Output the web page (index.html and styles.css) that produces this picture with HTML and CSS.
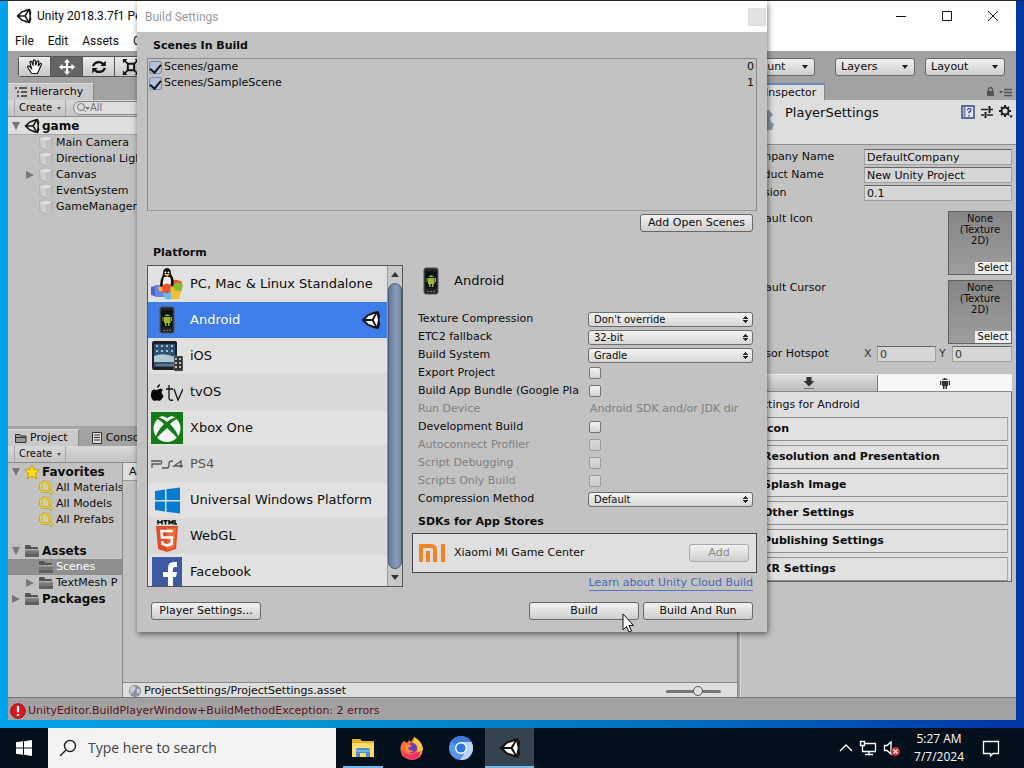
FILE: index.html
```html
<!DOCTYPE html>
<html lang="en">
<head>
<meta charset="utf-8">
<title>Unity - Build Settings</title>
<link rel="stylesheet" href="styles.css">
</head>
<body>
<svg class="sprite" aria-hidden="true">
  <symbol id="unity" viewBox="0 0 20 20"><path d="M2 10 7 5 16.500 2 18 10 16.500 18 7 15Z" class="u-bg"/><path d="M.5 10 6.500 4.500 12.800 1.800 17.500 1 19.200 5.500 18.400 10 19.200 14.500 17.500 19 12.800 18.200 6.500 15.500ZM4.500 9 10.800 9 14 3.800 7.500 6ZM15.800 4 12.600 10 15.800 16 17 10ZM4.500 11 7.500 14 14 16.200 10.800 11Z" fill-rule="evenodd" class="u-fg"/></symbol>
  <symbol id="cube" viewBox="0 0 16 16"><path d="M8 1 14.500 3 14 12 8 15.500 2 12 1.500 3Z" fill="#d0d0d0" stroke="#a8a8a8" stroke-width=".8"/><path d="M2 3.300 8 6 14 3.300 8 1.300Z" fill="#dedede"/><path d="M8 6 14 3.500 13.500 12 8 15Z" fill="#c2c2c2"/></symbol>
  <symbol id="folder" viewBox="0 0 16 16"><path d="M1 3Q1 2 2 2H6L7.500 4H13Q14 4 14 5V7H1Z" fill="#555"/><path d="M1 6H15V13Q15 14 14 14H2Q1 14 1 13Z" fill="#777"/><path d="M1 6H15V7.500H1Z" fill="#aaa"/><path d="M1 11H15V13Q15 14 14 14H2Q1 14 1 13Z" fill="#606060"/></symbol>
  <symbol id="lens" viewBox="0 0 18 18"><circle cx="8" cy="7.500" r="5.500" fill="#d2cea4" stroke="#b59a12" stroke-width="3"/><circle cx="8" cy="7.500" r="5.500" fill="none" stroke="#f2df4f" stroke-width="1.400"/><path d="m12 11.500 4 4.500" stroke="#b59a12" stroke-width="3.500"/><path d="m12 11.500 3.800 4" stroke="#f2df4f" stroke-width="1.500"/></symbol>
  <symbol id="phone" viewBox="0 0 32 32"><rect x="9" y="3" width="14" height="26" rx="2" fill="#242424" stroke="#555"/><rect x="10.500" y="6.500" width="11" height="17" fill="#07100a"/><path d="M13 13H19.500V19H13ZM13.500 12Q16.200 8.500 19 12ZM11.500 13h1v4h-1ZM20 13h1v4h-1ZM14 19h1.500v3H14ZM17 19H18.500v3h-1.500Z" fill="#9fb834"/><path d="M12 26.500h2m1 0h2m1 0h2" stroke="#777"/></symbol>
</svg>

<main class="desktop">
  <section class="window" aria-label="Unity editor">
    <header class="titlebar">
      <svg class="i16"><use href="#unity"/></svg>
      <span class="grow">Unity 2018.3.7f1 Personal</span>
      <button class="caption" aria-label="Minimize"><svg viewBox="0 0 12 12"><path d="M1 6.500H11"/></svg></button>
      <button class="caption" aria-label="Maximize"><svg viewBox="0 0 12 12"><path d="M1.500 1.500H10.500V10.500H1.500Z"/></svg></button>
      <button class="caption" aria-label="Close"><svg viewBox="0 0 12 12"><path d="M1 1 11 11M11 1 1 11"/></svg></button>
    </header>
    <nav class="menubar"><button>File</button><button>Edit</button><button>Assets</button><button>GameObject</button></nav>
    <div class="toolbar">
      <div class="tools">
        <button aria-label="Hand"><svg viewBox="0 0 20 20"><path d="M6 17 2 10.500Q1 8.500 3.500 9L6 11.500 4.500 5Q4.500 3 6.300 4L8 8.500V3Q9 1 10.300 3L10.700 8 12.500 3.500Q14 2.500 14.300 4.500L13.500 9 15.800 6Q17.500 5.500 17 7.500L14 14.500 12.500 17.500Z" fill="#fff" stroke="#111" stroke-width="1.300"/></svg></button>
        <button class="active" aria-label="Move"><svg viewBox="0 0 20 20"><path d="m10 1 3.500 4H11.200V8.800H15V6.500L19 10l-4 3.500v-2.300H11.200V15H13.500L10 19 6.500 15H8.800V11.200H5V13.500L1 10 5 6.500V8.800H8.800V5H6.500Z" fill="#fff"/></svg></button>
        <button aria-label="Rotate"><svg viewBox="0 0 20 20"><path d="M3.500 9Q5 4.500 10 4.500 13 4.500 15 7M16.500 11Q15 15.500 10 15.500 7 15.500 5 13" fill="none" stroke="#111" stroke-width="2.600"/><path d="M17.500 3V9H11.500ZM2.500 17V11H8.500Z" fill="#111"/></svg></button>
        <button aria-label="Scale"><svg viewBox="0 0 20 20"><path d="M6.500 6.500H13.500V13.500H6.500Z" fill="none" stroke="#111" stroke-width="2.200"/><path d="M2 2 6 6M18 2 14 6M2 18 6 14M18 18 14 14" stroke="#111" stroke-width="1.800"/><path d="M1 1H6L1 6ZM19 1V6L14 1ZM1 19V14L6 19ZM19 19H14L19 14Z" fill="#111"/></svg></button>
      </div>
      <div class="drops"><button>Account</button><button>Layers</button><button>Layout</button></div>
    </div>
    <div class="panes">
      <div class="left">
        <section class="hierarchy">
          <div class="tabs"><button class="tab on"><svg class="i12" viewBox="0 0 12 12"><path d="M0 2H2M4 2H12M2 6H4M6 6H12M2 10H4M6 10H12" stroke="#333" stroke-width="1.500"/></svg>Hierarchy</button></div>
          <div class="subbar"><button class="create">Create</button><label class="search"><svg class="i14" viewBox="0 0 14 14"><circle cx="5" cy="6" r="3.500" fill="none" stroke="#777"/><path d="m8 9 2 2" stroke="#777"/><path d="M9 6h5l-2.500 3Z" fill="#777"/></svg><input type="text" placeholder="All" aria-label="Search hierarchy"></label></div>
          <ul class="tree">
            <li class="scene"><i class="arrow down"></i><svg class="i16"><use href="#unity"/></svg><b>game</b></li>
            <li class="child"><i class="arrow"></i><svg class="i16"><use href="#cube"/></svg>Main Camera</li>
            <li class="child"><i class="arrow"></i><svg class="i16"><use href="#cube"/></svg>Directional Light</li>
            <li class="child"><i class="arrow right"></i><svg class="i16"><use href="#cube"/></svg>Canvas</li>
            <li class="child"><i class="arrow"></i><svg class="i16"><use href="#cube"/></svg>EventSystem</li>
            <li class="child"><i class="arrow"></i><svg class="i16"><use href="#cube"/></svg>GameManager</li>
          </ul>
        </section>
        <section class="project">
          <div class="tabs"><button class="tab on"><svg class="i12" viewBox="0 0 12 12"><path d="M.5 10.500V2.500H5L6 4H11V10.500ZM.5 5.500H11" fill="#999" stroke="#333"/></svg>Project</button><button class="tab"><svg class="i12" viewBox="0 0 12 12"><path d="M1.500.5H10.500V11.500H1.500Z" fill="#ddd" stroke="#333"/><path d="M3 3H9M3 5.500H9M3 8H9" stroke="#333"/></svg>Console</button></div>
          <div class="subbar"><button class="create">Create</button></div>
          <div class="browser">
            <ul class="tree folders">
              <li><i class="arrow down"></i><svg class="i16" viewBox="0 0 16 16"><path d="m8 .8 2.200 4.700 5.200.6-3.900 3.500 1.100 5.100L8 12.200l-4.600 2.500 1.100-5.100L.6 6.100l5.200-.6Z" fill="#ffdc20" stroke="#c89800"/></svg><b>Favorites</b></li>
              <li class="child"><i class="arrow"></i><svg class="i16"><use href="#lens"/></svg>All Materials</li>
              <li class="child"><i class="arrow"></i><svg class="i16"><use href="#lens"/></svg>All Models</li>
              <li class="child gap"><i class="arrow"></i><svg class="i16"><use href="#lens"/></svg>All Prefabs</li>
              <li><i class="arrow down"></i><svg class="i16"><use href="#folder"/></svg><b>Assets</b></li>
              <li class="child selected"><i class="arrow"></i><svg class="i16"><use href="#folder"/></svg>Scenes</li>
              <li class="child"><i class="arrow right"></i><svg class="i16"><use href="#folder"/></svg>TextMesh P</li>
              <li><i class="arrow right"></i><svg class="i16"><use href="#folder"/></svg><b>Packages</b></li>
            </ul>
            <div class="files">
              <div class="crumbs">Assets</div>
              <div class="pathbar"><svg class="i16" viewBox="0 0 16 16"><circle cx="8" cy="8" r="7" fill="#8c929b"/><path d="M2 5Q6 1 8 3T6 9 3 11ZM10 5l4 1-1 5-3-1Z" fill="#c9ced5"/></svg><span class="grow">ProjectSettings/ProjectSettings.asset</span><input type="range" min="0" max="100" value="60" aria-label="Icon size"></div>
            </div>
          </div>
        </section>
      </div>
      <aside class="inspector">
        <div class="tabs"><button class="tab on focus"><svg class="i12" viewBox="0 0 12 12"><circle cx="6" cy="6" r="5" fill="#345b9c"/></svg>Inspector</button><span class="grow"></span><svg class="tabicons" viewBox="0 0 28 12"><path d="M3.500 5V3Q5.500 0 7.500 3V5" fill="none" stroke="#555" stroke-width="1.500"/><path d="M2 5H9V10H2Z" fill="#555"/><path d="M14 5H18L16 7.500Z" fill="#555"/><path d="M19 3.500H27M19 6.500H27M19 9.500H27" stroke="#555" stroke-width="1.300"/></svg></div>
        <div class="ihead">
          <svg class="gear" viewBox="0 0 34 34"><path d="m13 1 6 0 1 4 4 2 4-2 4 5-3 3 1 4 3 2-2 6-4 0-3 3 0 4-6 2-3-3-4 0-3-3-5-2 1-5-3-3 2-6 4-1 2-4Z" fill="#8d959f"/><circle cx="16" cy="17" r="7" fill="#c9cdd2"/></svg>
          <h2>PlayerSettings</h2>
          <svg class="i14" viewBox="0 0 14 14"><path d="M1 1H13V13H1Z" fill="#e6eaf4" stroke="#334b80" stroke-width="1.500"/><path d="M3.500 2V12" stroke="#6d80ae" stroke-width="2"/><path d="M6 5Q8.500 2.500 10 4.500 10 6.500 8 7V8.500M8 10v1.500" fill="none" stroke="#334b80" stroke-width="1.300"/></svg>
          <svg class="i14" viewBox="0 0 14 14"><path d="M1 4.500H8M10 4.500H13M1 10H4M7 10H13" stroke="#222" stroke-width="1.600"/><path d="M9.500 1V8M5.500 7V13" stroke="#222" stroke-width="2"/></svg>
          <svg class="i14" viewBox="0 0 14 14"><circle cx="6" cy="6" r="3.500" fill="none" stroke="#222" stroke-width="2"/><path d="M6 0V2M6 10V12M0 6H2M10 6H12M2 2l1.300 1.300M10 2 8.700 3.300M2 10l1.300-1.300M10 10 8.700 8.700" stroke="#222" stroke-width="2"/><path d="M10 10.500h4L12 13Z" fill="#222"/></svg>
        </div>
        <div class="fields">
          <label class="field"><span>Company Name</span><input type="text" value="DefaultCompany"></label>
          <label class="field"><span>Product Name</span><input type="text" value="New Unity Project"></label>
          <label class="field"><span>Version</span><input type="text" value="0.1"></label>
          <div class="texfield"><span>Default Icon</span><div class="texture"><span>None<br>(Texture<br>2D)</span><button>Select</button></div></div>
          <div class="texfield"><span>Default Cursor</span><div class="texture"><span>None<br>(Texture<br>2D)</span><button>Select</button></div></div>
          <div class="field hotspot"><span>Cursor Hotspot</span><div class="xy"><label for="hx">X</label><input id="hx" type="text" value="0"><label for="hy">Y</label><input id="hy" type="text" value="0"></div></div>
        </div>
        <div class="platform-tabs">
          <button aria-label="Standalone"><svg class="i14" viewBox="0 0 14 14"><path d="M4.500 1H9.500V5H12.500L7 10.500 1.500 5H4.500Z" fill="#333"/><path d="M2 12.500H12" stroke="#777"/></svg></button>
          <button class="on" aria-label="Android"><svg class="i14" viewBox="0 0 14 14"><path d="M4 5H10V10H4ZM4 4Q7 0 10 4ZM2 5H3.300V9H2ZM10.700 5H12V9H10.700ZM5 10H6.500V13H5ZM7.500 10H9V13H7.500Z" fill="#333"/></svg></button>
        </div>
        <div class="groups">
          <p>Settings for Android</p>
          <button>Icon</button><button>Resolution and Presentation</button><button>Splash Image</button><button>Other Settings</button><button>Publishing Settings</button><button>XR Settings</button>
        </div>
      </aside>
    </div>
    <footer class="status"><svg class="i16" viewBox="0 0 16 16"><circle cx="8" cy="8" r="7.300" fill="#d9171c" stroke="#a20d10"/><path d="M8 3V9.300M8 11V13" stroke="#fff" stroke-width="2.200"/></svg>UnityEditor.BuildPlayerWindow+BuildMethodException: 2 errors</footer>
  </section>

  <section class="dialog" role="dialog" aria-labelledby="dlg-title">
    <header class="dlg-title"><h1 id="dlg-title">Build Settings</h1><button aria-label="Close"></button></header>
    <div class="dlg-body">
      <h2 class="heading">Scenes In Build</h2>
      <div class="scenes">
        <label><input type="checkbox" checked><span class="grow">Scenes/game</span><span>0</span></label>
        <label><input type="checkbox" checked><span class="grow">Scenes/SampleScene</span><span>1</span></label>
      </div>
      <div class="add-row"><button class="btn">Add Open Scenes</button></div>
      <h2 class="heading platform-heading">Platform</h2>
      <div class="columns">
        <div class="listbox">
          <ul class="platforms">
            <li><button><svg viewBox="0 0 32 32"><path d="M0 19 7 17 7 29 0 27Z" fill="#4a62c7"/><path d="M4 17h10v12H4Z" fill="#6a83e4"/><path d="M12 13Q17 10 21 15V31Q14 33 12 27Z" fill="#64bce8"/><path d="M19 13Q24 10 31 14L29 23 19 21Z" fill="#e6582c"/><path d="M23 16Q28 13 32 17L30 24H22Z" fill="#84bd32"/><path d="M20 23Q25 21 30 24L28 31H20Z" fill="#f1c02c"/><path d="M16 0Q20 0 20 6 24 12 22 18L16 21 9 18Q9 12 12 6 12 0 16 0Z" fill="#080808"/><path d="M13 9H19Q21 14 19 19H12Q11 14 13 9Z" fill="#eee"/><path d="M13 6 19 6 16 9Z" fill="#f0b223"/><circle cx="14.500" cy="4.500" r="1" fill="#fff"/><circle cx="17.500" cy="4.500" r="1" fill="#fff"/><path d="M11 18Q16 13 21 18L19 24Q15 27 11 23Z" fill="#e6532c"/><path d="M7 20Q10 16 12 22L9 24ZM19 20Q22 16 24 21L20 24Z" fill="#f3b725"/></svg><span>PC, Mac &amp; Linux Standalone</span></button></li>
            <li class="selected"><button><svg><use href="#phone"/></svg><span class="grow">Android</span><svg class="current"><use href="#unity"/></svg></button></li>
            <li><button><svg viewBox="0 0 32 32"><rect x="1" y="1" width="25" height="29" rx="2" fill="#1d2026"/><rect x="3" y="4" width="21" height="23" fill="#31506e"/><path d="M3 16Q12 12 24 17V22H3Z" fill="#b3c8d5"/><path d="M5 5h2v2H5ZM10 5h2v2h-2ZM15 5h2v2h-2ZM20 5h2v2h-2ZM5 10h2v2H5ZM10 10h2v2h-2ZM15 10h2v2h-2ZM20 10h2v2h-2Z" fill="#9ac2e2"/><path d="M5 24h17v2H5Z" fill="#637787"/><rect x="23" y="16" width="9" height="15" fill="#333" stroke="#aaa" stroke-width=".5"/><path d="M24 18h2v2h-2ZM28 18h2v2h-2ZM24 22h2v2h-2ZM28 22h2v2h-2ZM24 26h2v2h-2ZM28 26h2v2h-2Z" fill="#b2bdc6"/></svg><span>iOS</span></button></li>
            <li><button><svg viewBox="0 0 32 32"><path d="M6 12Q6 9 9 8 9 11 6 12M6 14Q10 11 12 14 9 16 12.500 20 10 26 7 24.500H5Q1 26 0 20-.5 12 6 14Z" fill="#080808"/><path d="M18 9V22Q18 25 22 24M15 13H22M23 13 27 24 32 13" fill="none" stroke="#111" stroke-width="1.300"/></svg><span>tvOS</span></button></li>
            <li><button><svg viewBox="0 0 32 32"><path d="M0 0H32V32H0Z" fill="#127b16"/><circle cx="16" cy="16.500" r="13.500" fill="#f6f6f6"/><path d="M7 4Q11 3 16 6 21 3 25 4 21 2 16 2T7 4ZM4 6Q9 4 16 10 23 4 28 6 24 7 19 12 27 20 28 28 23 22 16 16 9 22 4 28 5 20 13 12 8 7 4 6Z" fill="#127b16"/></svg><span>Xbox One</span></button></li>
            <li class="muted"><button><svg viewBox="0 0 32 32"><path d="M0 13H9Q12 13 10 16H1V20M11 20H16Q18 20 18 17V15Q18 13 22 13M32 18H23L30 13V20" fill="none" stroke="#555" stroke-width="1.300"/></svg><span>PS4</span></button></li>
            <li><button><svg viewBox="0 0 32 32"><path d="M4 7 14 5.500V16H4ZM15.500 5.300 29 3.500V16H15.500ZM4 17.500H14V27.500L4 26ZM15.500 17.500H29V29.500L15.500 27.700Z" fill="#087bd0"/></svg><span>Universal Windows Platform</span></button></li>
            <li><button><svg viewBox="0 0 32 32"><path d="M7 0V4.500M11 0V4.500M7 2.200H11M12.500.7H16.500M14.500 0V4.500M18 4.500V.5L20 3 22 .5V4.500M24 0V4H26" fill="none" stroke="#080808" stroke-width="1.500"/><path d="M5 6H27L25 29 16 32 7 29Z" fill="#df4e27"/><path d="M16 8H25L23.500 27.500 16 30Z" fill="#ef6b35"/><path d="M22 11H10.500L11 17.500H21L20.500 24 16 25.500 11.500 24 11.200 21" fill="none" stroke="#fff" stroke-width="2.600"/></svg><span>WebGL</span></button></li>
            <li><button><svg viewBox="0 0 32 32"><path d="M1 1H31V32H1Z" fill="#3d59a0"/><path d="M17 32V21H12V16H17V12Q17 6 23 6H26V11H24Q22 11 22 13V16H26L25 21H22V32Z" fill="#fff"/></svg><span>Facebook</span></button></li>
          </ul>
          <div class="scrollbar"><i class="up"></i><div class="thumb"></div><i class="dn"></i></div>
        </div>
        <div class="details">
          <div class="ptitle"><svg><use href="#phone"/></svg><span>Android</span></div>
          <div class="options">
            <label for="tc">Texture Compression</label><select id="tc"><option>Don't override</option></select>
            <label for="etc">ETC2 fallback</label><select id="etc"><option>32-bit</option></select>
            <label for="bs">Build System</label><select id="bs"><option>Gradle</option></select>
            <label for="ep">Export Project</label><input type="checkbox" id="ep">
            <label for="ab">Build App Bundle (Google Pla</label><input type="checkbox" id="ab">
            <span class="off">Run Device</span><span class="off dev">Android SDK and/or JDK dir</span>
            <label for="db">Development Build</label><input type="checkbox" id="db">
            <label for="ap" class="off">Autoconnect Profiler</label><input type="checkbox" id="ap" disabled>
            <label for="sd" class="off">Script Debugging</label><input type="checkbox" id="sd" disabled>
            <label for="so" class="off">Scripts Only Build</label><input type="checkbox" id="so" disabled>
            <label for="cm">Compression Method</label><select id="cm"><option>Default</option></select>
          </div>
          <h2 class="heading sdk">SDKs for App Stores</h2>
          <div class="store"><svg viewBox="0 0 26 18"><path d="M2 18V2H12Q16 2 16 6V18M9 7V18M24 0V18" fill="none" stroke="#ef8528" stroke-width="4"/></svg><span class="grow">Xiaomi Mi Game Center</span><button class="btn" disabled>Add</button></div>
          <a class="cloud" href="#">Learn about Unity Cloud Build</a>
        </div>
      </div>
      <div class="actions"><button class="btn">Player Settings...</button><span class="grow"></span><button class="btn">Build</button><button class="btn">Build And Run</button></div>
    </div>
    <svg class="cursor" viewBox="0 0 12 20"><path d="M1 1V17L4.500 13.500 7 19 9.500 18 7 12.500H11.500Z" fill="#fff" stroke="#111"/></svg>
  </section>
</main>

<footer class="taskbar">
  <button class="start" aria-label="Start"><svg viewBox="0 0 16 16"><path d="M0 2.300 7 1.300V7.500H0ZM8 1.200 16 0V7.500H8ZM0 8.500H7V14.700L0 13.700ZM8 8.500H16V16L8 14.800Z" fill="#fff"/></svg></button>
  <label class="tsearch"><svg viewBox="0 0 18 18"><circle cx="11" cy="7" r="5.500" fill="none" stroke="#222" stroke-width="1.400"/><path d="M7 11 1 17" stroke="#222" stroke-width="1.400"/></svg><input type="text" placeholder="Type here to search" aria-label="Search"></label>
  <nav class="apps">
    <button class="open" aria-label="File Explorer"><svg viewBox="0 0 24 24"><path d="M1 3H9L11 5H23V21H1Z" fill="#e9ad2c"/><path d="M1 7H23V21H1Z" fill="#ffdc6c"/><path d="M5 21V14Q5 12 7 12H17Q19 12 19 14V21H15V17H9V21Z" fill="#468fd0"/><path d="M5 14H19V16H5Z" fill="#70b5e5"/></svg></button>
    <button aria-label="Firefox"><svg viewBox="0 0 24 24"><path d="M4 5 7 7 9 4 11 6 14 1Q20 5 22 9 25 23 12 24 0 23 .500 12Q1 7 4 5Z" fill="#ff7139"/><path d="M14 1Q22 5 23 13 19 24 12 20 18 18 18 13 17 8 12 6 15 5 14 1Z" fill="#ffcb3d"/><path d="M1 12Q5 20 12 18T21 15Q19 24 12 24 3 24 1 12Z" fill="#f33565"/><circle cx="12" cy="12" r="5" fill="#6e3bc3"/><path d="M5 9Q10 7 12 10L8 12Q9 15 14 15 9 18 6 14Z" fill="#ff8b36"/></svg></button>
    <button aria-label="Chromium"><svg viewBox="0 0 24 24"><circle cx="12" cy="12" r="12" fill="#5b96ed"/><path d="M12 6H22.400A12 12 0 0 1 11 24L17 15Z" fill="#b9d3fb"/><path d="M2 5.500A12 12 0 0 1 22.400 6H12L7 10Z" fill="#397cde"/><circle cx="12" cy="12" r="6" fill="#fff"/><circle cx="12" cy="12" r="4.600" fill="#2f76df"/></svg></button>
    <button class="open current-app" aria-label="Unity"><svg><use href="#unity"/></svg></button>
  </nav>
  <div class="tray">
    <svg class="i14" viewBox="0 0 14 14"><path d="m1 10 6-6 6 6"/></svg>
    <svg class="net" viewBox="0 0 18 16"><path d="M5 3.500H16.500V11.500H3.500V6M10 11.500V14.500M6 14.500H14M1.500 1.500H5.500V5.500H1.500Z"/></svg>
    <svg class="vol" viewBox="0 0 18 16"><path d="M1.500 5.500H4L8 2V14L4 10.500H1.500Z"/><circle cx="12.500" cy="11.500" r="4.500" class="red"/><path d="m10.500 9.500 4 4m0-4-4 4" class="cross"/></svg>
    <time>5:27 AM<br>7/7/2024</time>
    <svg class="note" viewBox="0 0 18 18"><path d="M1.500 2.500H16.500V14.500H11L8.500 17V14.500H1.500Z"/></svg>
  </div>
</footer>
</body>
</html>
```
FILE: styles.css
```css
* { box-sizing: border-box; }
body { margin: 0; height: 100vh; display: flex; flex-direction: column; overflow: hidden; font: 11px/16px "DejaVu Sans", sans-serif; color: #0c0c0c; }
button, input, select { font: inherit; color: inherit; margin: 0; padding: 0; border: 0; background: none; border-radius: 0; min-width: 0; }
button { white-space: nowrap; }
h1, h2, p, ul { margin: 0; padding: 0; list-style: none; font-size: inherit; font-weight: inherit; }
svg { flex: none; display: block; }
.sprite { position: absolute; width: 0; height: 0; }
.grow { flex: 1; min-width: 0; }
.i12 { width: 12px; height: 12px; }
.i14 { width: 14px; height: 14px; }
.i16 { width: 16px; height: 16px; }
.u-bg { fill: var(--unity-face, none); }
.u-fg { fill: #141414; }

.desktop { flex: 1; min-height: 0; position: relative; padding: 1px 8px 8px; background: linear-gradient(90deg, #00a2ec, #0094d4 30%, #0069bd 70%, #0036a6 98%); box-shadow: inset 0 1px #202830; }
.window { height: 100%; display: flex; flex-direction: column; background: #a2a2a2; }

.titlebar { height: 30px; flex: none; display: flex; align-items: center; background: #fff; padding-left: 8px; gap: 5px; font: 12px/16px Roboto, sans-serif; white-space: nowrap; }
.caption { width: 41px; height: 30px; display: grid; place-items: center; }
.caption:last-child { margin-right: 3px; }
.caption svg { width: 12px; height: 12px; fill: none; stroke: #111; }
.menubar { height: 20px; flex: none; display: flex; gap: 14px; padding: 0 7px; background: #fff; font: 12px/20px Roboto, sans-serif; }
.toolbar { height: 32px; flex: none; display: flex; justify-content: space-between; align-items: center; padding: 0 11px 1px 10px; }
.tools { display: flex; height: 21px; border: 1px solid #555; border-radius: 3px; }
.tools button { width: 32px; display: grid; place-items: center; background: linear-gradient(#eee, #c8c8c8); border-right: 1px solid #555; }
.tools button:last-child { border: 0; }
.tools .active { background: #646464; }
.tools svg { width: 18px; height: 18px; }
.drops { display: flex; gap: 10px; }
.drops button, .btn { height: 18px; border: 1px solid #686868; border-radius: 3px; background: linear-gradient(#f2f2f2, #cecece); line-height: 16px; }
.drops button { width: 80px; padding: 0 6px 0 5px; display: flex; justify-content: space-between; align-items: center; }
.drops button:first-child { margin-right: 10px; }
.drops button::after, .create::after { content: ""; border: 3px solid transparent; border-top: 4px solid #222; border-bottom: 0; }

.panes { flex: 1; min-height: 0; display: grid; grid-template-columns: minmax(0, 1fr) 276px; gap: 2px; border-bottom: 1px solid #777; }
.left { display: grid; grid-template-rows: minmax(0, 344fr) minmax(0, 271fr); }
.hierarchy, .project { display: flex; flex-direction: column; min-height: 0; }
.project { padding-top: 3px; }
.tabs { height: 17px; flex: none; display: flex; align-items: center; background: #a2a2a2; }
.tab { height: 17px; display: flex; align-items: center; gap: 3px; padding: 0 10px 0 7px; }
.tab + .tab { padding-left: 12px; }
.tab.on { background: #c9c9c9; border-right: 1px solid #888; border-top: 1px solid #ddd; }
.tab.focus { padding: 0 8px 0 9px; border-top: 2px solid #6b89b5; background: #dedede; }
.tabicons { width: 28px; height: 12px; margin-right: 3px; }
.subbar { height: 17px; flex: none; display: flex; padding-left: 6px; background: linear-gradient(#d8d8d8, #c4c4c4); border-bottom: 1px solid #8b8b8b; }
.create { width: 52px; display: flex; align-items: center; justify-content: space-between; padding: 0 4px; border: 1px solid #a8a8a8; border-width: 0 1px; font-size: 10px; line-height: 16px; }
.create::after { border-width: 3px 2px 0; border-top-color: #555; }
.search { flex: 1; display: flex; align-items: center; margin: 1px 8px 1px 7px; padding-left: 2px; border: 1px solid #888; border-radius: 8px; background: #ddd; }
.search input { width: 100%; font-size: 10px; line-height: 12px; }
.search input::placeholder { color: #777; opacity: 1; }
.tree { flex: 1; background: #c2c2c2; white-space: nowrap; overflow: hidden; min-height: 0; }
.tree li { display: flex; align-items: center; height: 16px; padding-left: 2px; gap: 2px; }
.tree b { font-size: 12px; }
.tree .child { padding-left: 16px; }
.tree .scene { height: 18px; background: #dedede; border-bottom: 1px solid #a8a8a8; }
.tree .gap { margin-bottom: 15px; }
.tree .selected { background: #8f8f8f; color: #fff; }
.arrow { width: 12px; height: 12px; display: grid; place-items: center; flex: none; }
.down::before { content: ""; border: 4px solid transparent; border-top: 8px solid #777; border-bottom: 0; }
.right::before { content: ""; border: 4px solid transparent; border-left: 8px solid #777; border-right: 0; }
.browser { flex: 1; min-height: 0; display: grid; grid-template-columns: 115px minmax(0, 1fr); }
.folders { border-right: 1px solid #888; padding-top: 1px; }
.files { display: flex; flex-direction: column; justify-content: space-between; background: #c2c2c2; border-right: 1px solid #888; }
.crumbs { height: 18px; padding-left: 6px; background: #dedede; border-bottom: 1px solid #999; line-height: 18px; }
.pathbar { height: 15px; display: flex; align-items: center; gap: 1px; padding: 2px 16px 0 4px; background: #dedede; border-top: 1px solid #888; }
.pathbar .i16 { height: 14px; }
.pathbar input { appearance: none; width: 55px; height: 3px; background: #777; border-radius: 2px; }
.pathbar input::-webkit-slider-thumb { appearance: none; width: 10px; height: 10px; border: 1px solid #555; border-radius: 50%; background: #e0e0e0; }

.inspector { min-height: 0; background: #c2c2c2; border-left: 1px solid #ddd; }
.ihead { height: 45px; display: flex; align-items: flex-start; gap: 5px; padding: 5px 3px 0 0; background: #dedede; border-bottom: 1px solid #8a8a8a; }
.gear { width: 34px; height: 34px; }
.ihead h2 { flex: 1; padding-left: 5px; font-size: 13px; }
.fields { padding: 3px 4px 0 5px; }
.field { display: grid; grid-template-columns: minmax(0, 1fr) 148px; align-items: center; height: 18px; }
.field input { width: 100%; height: 16px; padding: 0 2px; line-height: 14px; border: 1px solid #a0a0a0; border-top-color: #666; background: #d6d6d6; }
.texfield { display: flex; justify-content: space-between; height: 64px; }
.field + .texfield { margin-top: 9px; }
.texfield + .texfield { margin-top: 5px; }
.texture { width: 64px; height: 64px; display: flex; flex-direction: column; justify-content: space-between; border: 1px solid #606060; background: linear-gradient(#868686, #9d9d9d); text-align: center; font-size: 10px; line-height: 11px; padding-top: 1px; }
.texture button { align-self: flex-end; height: 12px; width: 36px; background: #eee; line-height: 12px; }
.hotspot { margin-top: 1px; }
.xy { display: grid; grid-template-columns: 10px 59px 10px 60px; gap: 3px; align-items: center; color: #333; }
.platform-tabs { display: grid; grid-template-columns: minmax(0, 1fr) minmax(0, 1fr); height: 18px; margin: 11px 4px 0 0; border-top: 1px solid #eee; border-bottom: 1px solid #888; }
.platform-tabs button { display: grid; place-items: center; background: linear-gradient(#ddd, #bdbdbd); }
.platform-tabs .on { background: #f7f7f7; border-left: 1px solid #777; }
.groups { display: flex; flex-direction: column; gap: 4px; margin: 0 4px 0 5px; padding: 4px 3px 0; background: #dedede; border: 1px solid #666; border-top: 0; }
.groups p { height: 17px; line-height: 18px; }
.groups button { height: 24px; text-align: left; font-weight: bold; padding-left: 12px; border: 1px solid #919191; border-right-color: #aaa; background: #e1e1e1; }
.status { height: 22px; flex: none; display: flex; align-items: center; gap: 2px; padding: 3px 0 0 2px; color: #5c1018; }

.dialog { position: absolute; left: 137px; top: 1px; width: 630px; background: #c2c2c2; box-shadow: 1px 2px 6px #0008; }
.dlg-title { height: 31px; display: flex; align-items: center; justify-content: space-between; padding-left: 8px; background: #fff; font: 12px/16px Roboto, sans-serif; color: #999; }
.dlg-title button { width: 18px; height: 18px; margin-right: 1px; background: #e2e2e2; border: 1px solid #ddd; }
.dlg-body { padding: 6px 10px 12px; }
.heading { font-weight: bold; font-size: 11px; line-height: 16px; padding-left: 6px; }
.scenes { height: 153px; margin-top: 4px; border: 1px solid #8a8a8a; border-bottom-color: #999; }
.scenes label { display: flex; align-items: center; height: 16px; gap: 2px; padding: 0 2px 0 1px; }
input[type=checkbox] { appearance: none; width: 12px; height: 12px; border: 1px solid #757575; border-radius: 2px; background: linear-gradient(#f3f3f3, #d3d3d3); display: grid; place-items: center; }
input[type=checkbox]:checked { width: 13px; height: 13px; background: #b0c2d8; border-color: #7890ac; }
input[type=checkbox]:checked::before { content: ""; width: 5px; height: 9px; margin-bottom: 3px; border: solid #10151c; border-width: 0 2px 2px 0; rotate: 40deg; }
input[type=checkbox]:disabled { opacity: .5; }
.add-row { display: flex; justify-content: flex-end; padding: 3px 4px 0 0; }
.add-row .btn { width: 113px; }
.platform-heading { margin-top: 13px; }
.columns { display: grid; grid-template-columns: 256px minmax(0, 1fr); gap: 9px; margin-top: 4px; }
.listbox { height: 322px; display: grid; grid-template-columns: minmax(0, 1fr) 15px; border: 1px solid #555; overflow: hidden; }
.platforms { overflow: hidden; min-height: 0; }
.platforms li { height: 36px; background: #e1e1e1; }
.platforms li:nth-child(even) { background: #d9d9d9; }
.platforms li.selected { background: #3f7de8; color: #fff; }
.platforms .muted { color: #555; }
.platforms button { width: 100%; height: 36px; display: flex; align-items: center; gap: 7px; padding: 0 6px 0 3px; font-size: 13px; text-align: left; }
.platforms svg { width: 32px; height: 32px; }
.platforms .current { width: 20px; height: 20px; --unity-face: #fff; }
.scrollbar { display: flex; flex-direction: column; align-items: center; background: #c8c8c8; border-left: 1px solid #999; }
.up, .dn { height: 17px; display: grid; place-items: center; flex: none; }
.up::before, .dn::before { content: ""; border: 4px solid transparent; border-bottom: 5px solid #333; border-top: 0; }
.dn::before { border-top: 5px solid #333; border-bottom: 0; }
.thumb { width: 14px; flex: 1; border: 1px solid #4b5c78; border-radius: 7px; background: linear-gradient(90deg, #66789a, #8c9dba 60%, #7386a6); }
.details { display: flex; flex-direction: column; min-width: 0; }
.ptitle { height: 32px; display: flex; align-items: center; gap: 7px; padding-left: 3px; font-size: 13px; }
.ptitle svg { width: 32px; height: 32px; }
.options { display: grid; grid-template-columns: 170px minmax(0, 1fr); grid-auto-rows: 18px; align-items: center; padding: 13px 4px 0 6px; white-space: nowrap; }
.options select { appearance: none; width: 100%; height: 15px; padding: 0 14px 0 5px; border: 1px solid #6d6d6d; border-radius: 3px; background: conic-gradient(from 135deg at 50% 0, #222 25%, #0000 0) right 4px top 3px / 5px 3px no-repeat, conic-gradient(from -45deg at 50% 100%, #222 25%, #0000 0) right 4px top 7px / 5px 3px no-repeat, linear-gradient(#f4f4f4, #d6d6d6); font-size: 10px; line-height: 13px; }
.off { color: #808080; }
.dev { padding-left: 2px; }
.options input { margin-left: 1px; }
.sdk { margin-top: 6px; }
.store { height: 40px; display: flex; align-items: center; margin-top: 3px; padding: 0 7px 0 6px; gap: 9px; border: 1px solid #444; background: #dfdfdf; }
.store svg { width: 26px; height: 18px; }
.store .btn { width: 60px; height: 18px; }
.btn:disabled { color: #888; border-color: #aaa; }
.cloud { align-self: flex-end; margin: 2px 4px 0 0; line-height: 15px; color: #4a68ba; text-decoration: none; border-bottom: 1px solid #5a78c8; }
.actions { display: flex; gap: 4px; padding: 11px 4px 0; }
.actions .btn { width: 110px; }
.cursor { position: absolute; left: 485px; top: 612px; width: 12px; height: 20px; }

.taskbar { height: 40px; flex: none; display: flex; background: #03101b; color: #fff; font: 12px/18px "Open Sans", sans-serif; }
.start { width: 48px; display: grid; place-items: center; }
.start svg { width: 16px; height: 16px; }
.tsearch { width: 288px; display: flex; align-items: center; gap: 11px; padding-left: 11px; background: #f3f3f3; color: #333; }
.tsearch svg { width: 18px; height: 18px; }
.tsearch input { width: 220px; font-size: 14px; line-height: 20px; }
.tsearch input::placeholder { color: #444; opacity: 1; }
.apps { display: flex; padding-left: 2px; }
.apps button { width: 49px; display: grid; place-items: center; }
.apps .open { background: linear-gradient(#76b9ed, #76b9ed) center bottom / 40px 2px no-repeat; }
.apps .current-app { background: linear-gradient(#76b9ed, #76b9ed) center bottom / 100% 2px no-repeat #34434d; --unity-face: #fff; }
.apps svg { width: 24px; height: 24px; }
.apps .current-app svg { width: 22px; height: 22px; }
.tray { margin-left: auto; display: flex; align-items: center; gap: 6px; padding-right: 24px; text-align: center; }
.tray svg { fill: none; stroke: #fff; stroke-width: 1.3; }
.net { width: 18px; height: 16px; }
.vol { width: 18px; height: 16px; }
.note { width: 18px; height: 18px; margin-left: 12px; }
.tray time { margin-left: 7px; }
.tray .red { fill: #d9263a; stroke: none; }
```
